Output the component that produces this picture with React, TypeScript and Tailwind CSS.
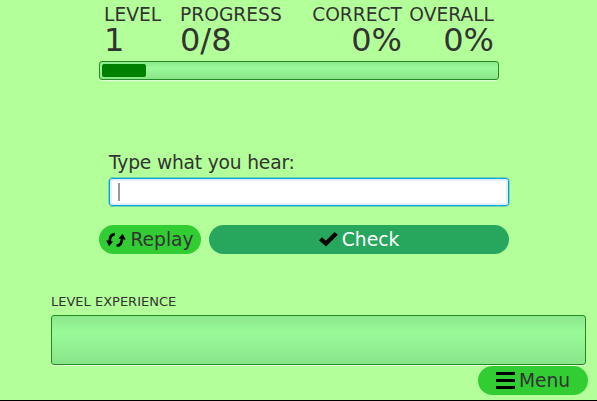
import React from "react";

function Stat({ label, value, className }: { label: string; value: string; className: string }) {
  return (
    <div className={`flex flex-col whitespace-nowrap ${className}`}>
      <span className="text-[18.67px] leading-[22px]">{label}</span>
      <span className="text-[32px] leading-[28px]">{value}</span>
    </div>
  );
}

const track =
  "rounded-[3px] border border-[#228b22] bg-linear-to-b from-[#8ce78c] via-[#98fb98] via-35% to-[#89e489] shadow-[0_1px_0_#e2ffd8]";

function RefreshIcon() {
  return (
    <svg width="20" height="16" viewBox="0 0 20 16" className="shrink-0">
      <path d="M8.8 2.2C5.6 2.4 3.8 4.6 3.7 9" fill="none" stroke="#000" strokeWidth="2.8" />
      <path d="M0 8.3L7 9.6L3.2 14.2Z" fill="#000" />
      <path d="M10.6 13.7C14.2 13.5 15.8 11.3 16 7" fill="none" stroke="#000" strokeWidth="2.8" />
      <path d="M12.5 6.4L19.8 7.7L16.6 1.8Z" fill="#000" />
    </svg>
  );
}

function CheckIcon() {
  return (
    <svg width="19" height="15" viewBox="0 0 19 15" className="shrink-0">
      <path d="M0 8.2L3 5.2L6.8 8.7L15.6 0L18.8 2.8L7 14.5Z" fill="#000" />
    </svg>
  );
}

function MenuIcon() {
  return (
    <svg width="19" height="17" viewBox="0 0 19 17" className="shrink-0">
      <path d="M0 0H19V3H0ZM0 7H19V10H0ZM0 14H19V17H0Z" fill="#000" />
    </svg>
  );
}

export default function App() {
  return (
    <div className="flex h-[401px] w-[597px] flex-col overflow-hidden border-b border-black bg-[#b3ff99] font-['DejaVu_Sans',sans-serif] text-[#333]">
      <header className="ml-[104px] flex h-[61px] w-[390px] pt-[4px]">
        <Stat label="LEVEL" value="1" className="w-[76px]" />
        <Stat label="PROGRESS" value="0/8" className="w-[122px]" />
        <Stat label="CORRECT" value="0%" className="w-[100px] items-end" />
        <Stat label="OVERALL" value="0%" className="w-[92px] items-end" />
      </header>
      <div className={`ml-[99px] h-[19px] w-[400px] shrink-0 p-[2px] ${track}`}>
        <div className="h-[13px] w-[44px] rounded-[2px] bg-[#008000]" />
      </div>
      <main className="mt-[71px] ml-[99px] flex w-[410px] flex-col">
        <label className="ml-[10px] text-[18.67px] leading-[24px] tracking-[-0.18px] whitespace-nowrap">Type what you hear:</label>
        <div className="mt-[2px] ml-[9px] flex h-[30px] w-[402px] items-center rounded-[4px] border border-[#7ad9b5] bg-white">
          <div className="flex h-full w-full items-center rounded-[3px] border border-[#039ed3] pl-[8px] shadow-[inset_0_0_0_2px_#e0f1fa]">
            <div className="h-[18px] w-[2px] bg-[#999]" />
          </div>
        </div>
        <div className="mt-[18px] flex gap-[8px] text-[18.67px]">
          <button className="flex h-[29px] w-[102px] items-center justify-center gap-[4px] rounded-full bg-[#32cd32]">
            <RefreshIcon />
            <span>Replay</span>
          </button>
          <button className="flex h-[29px] w-[300px] items-center justify-center gap-[4px] rounded-full bg-[#27a65d] text-white">
            <CheckIcon />
            <span>Check</span>
          </button>
        </div>
      </main>
      <section className="mt-[40px] ml-[51px] flex w-[535px] flex-col">
        <h2 className="text-[13px] leading-[16px]">LEVEL EXPERIENCE</h2>
        <div className={`mt-[5px] h-[50px] w-full ${track}`} />
      </section>
      <button className="mt-[1px] ml-[478px] flex h-[29px] w-[110px] shrink-0 items-center justify-center gap-[4px] rounded-full bg-[#32cd32] text-[18.67px]">
        <MenuIcon />
        <span>Menu</span>
      </button>
    </div>
  );
}
